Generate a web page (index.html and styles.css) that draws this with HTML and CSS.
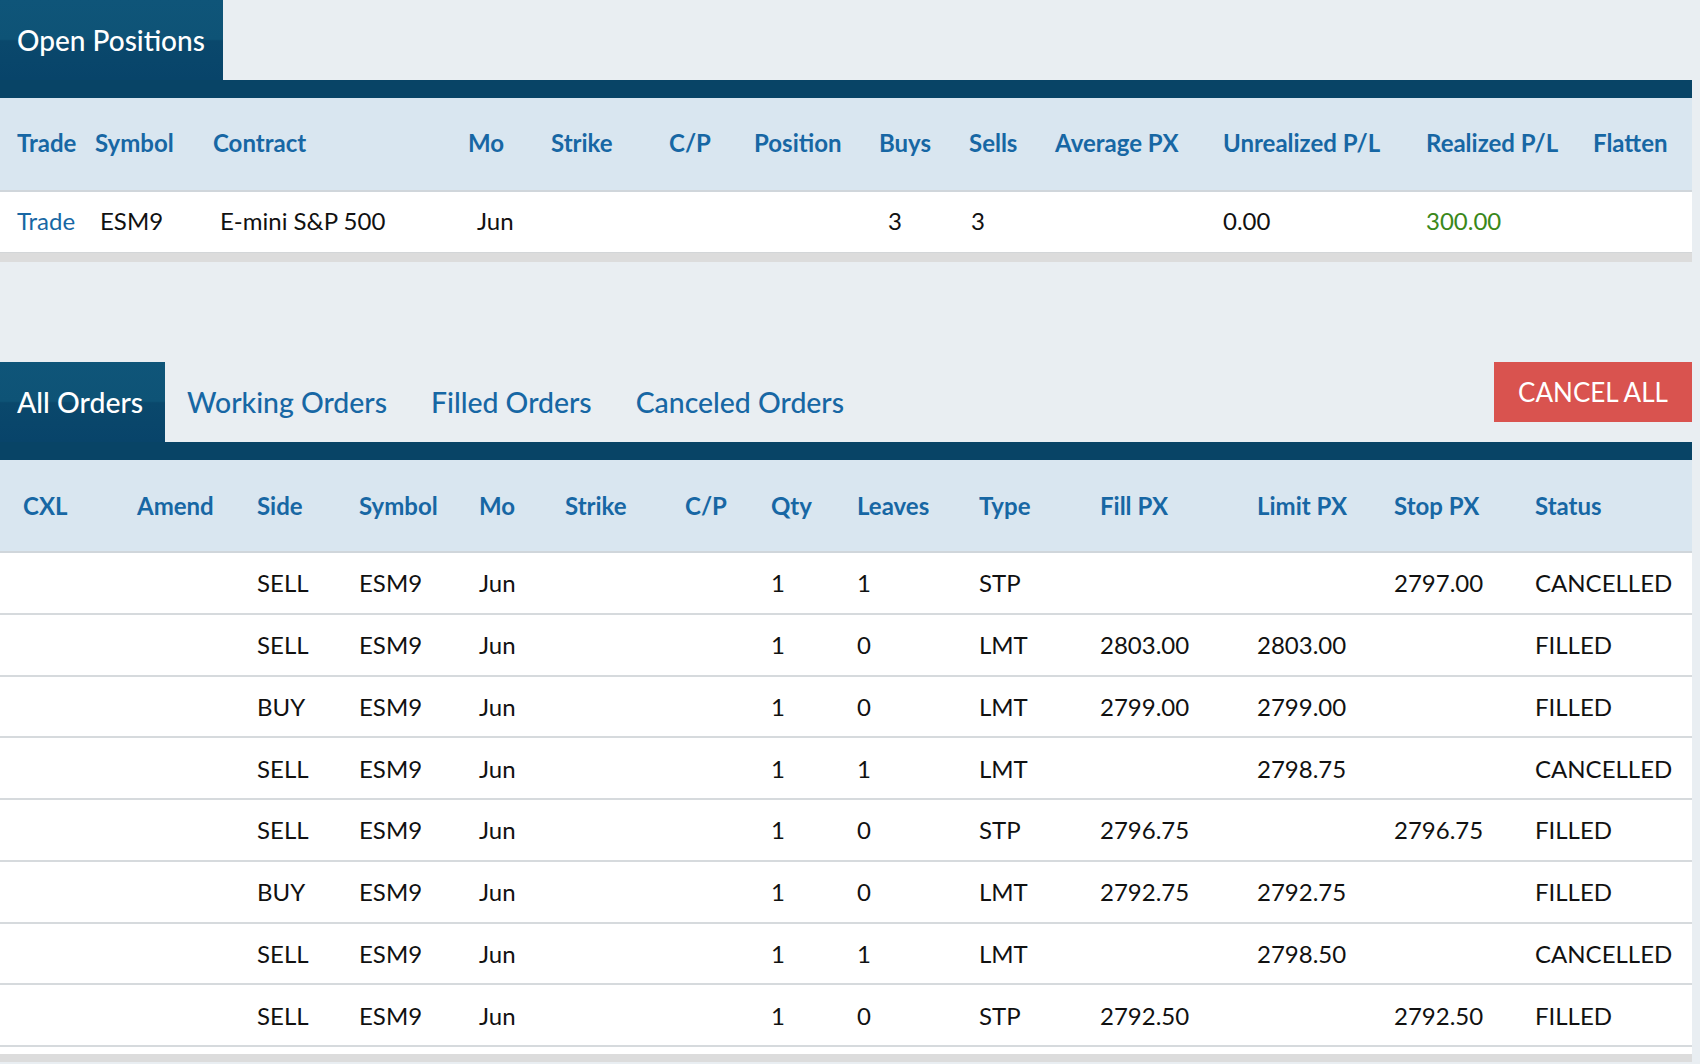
FILE: index.html
```html
<!DOCTYPE html>
<html lang="en">
<head>
<meta charset="utf-8">
<title>Positions and Orders</title>
<link rel="stylesheet" href="styles.css">
</head>
<body>
<div class="page">
  <section class="panel positions">
    <div class="tabbar">
      <div class="tab active">Open Positions</div>
    </div>
    <div class="bar"></div>
    <div class="pos-grid head">
      <div>Trade</div><div>Symbol</div><div>Contract</div><div>Mo</div><div>Strike</div><div>C/P</div><div>Position</div><div>Buys</div><div>Sells</div><div>Average PX</div><div>Unrealized P/L</div><div>Realized P/L</div><div>Flatten</div>
    </div>
    <div class="pos-grid data">
      <div class="link">Trade</div><div>ESM9</div><div>E-mini S&amp;P 500</div><div>Jun</div><div></div><div></div><div></div><div>3</div><div>3</div><div></div><div>0.00</div><div class="gain">300.00</div><div></div>
    </div>
    <div class="strip"></div>
  </section>

  <section class="panel orders">
    <div class="tabbar">
      <div class="tab active">All Orders</div>
      <div class="tab">Working Orders</div>
      <div class="tab">Filled Orders</div>
      <div class="tab">Canceled Orders</div>
      <button class="cancel-all">CANCEL ALL</button>
    </div>
    <div class="bar"></div>
    <div class="ord-grid head">
      <div>CXL</div><div>Amend</div><div>Side</div><div>Symbol</div><div>Mo</div><div>Strike</div><div>C/P</div><div>Qty</div><div>Leaves</div><div>Type</div><div>Fill PX</div><div>Limit PX</div><div>Stop PX</div><div>Status</div>
    </div>
    <div class="ord-grid row">
      <div></div><div></div><div>SELL</div><div>ESM9</div><div>Jun</div><div></div><div></div><div>1</div><div>1</div><div>STP</div><div></div><div></div><div>2797.00</div><div>CANCELLED</div>
    </div>
    <div class="ord-grid row">
      <div></div><div></div><div>SELL</div><div>ESM9</div><div>Jun</div><div></div><div></div><div>1</div><div>0</div><div>LMT</div><div>2803.00</div><div>2803.00</div><div></div><div>FILLED</div>
    </div>
    <div class="ord-grid row">
      <div></div><div></div><div>BUY</div><div>ESM9</div><div>Jun</div><div></div><div></div><div>1</div><div>0</div><div>LMT</div><div>2799.00</div><div>2799.00</div><div></div><div>FILLED</div>
    </div>
    <div class="ord-grid row">
      <div></div><div></div><div>SELL</div><div>ESM9</div><div>Jun</div><div></div><div></div><div>1</div><div>1</div><div>LMT</div><div></div><div>2798.75</div><div></div><div>CANCELLED</div>
    </div>
    <div class="ord-grid row">
      <div></div><div></div><div>SELL</div><div>ESM9</div><div>Jun</div><div></div><div></div><div>1</div><div>0</div><div>STP</div><div>2796.75</div><div></div><div>2796.75</div><div>FILLED</div>
    </div>
    <div class="ord-grid row">
      <div></div><div></div><div>BUY</div><div>ESM9</div><div>Jun</div><div></div><div></div><div>1</div><div>0</div><div>LMT</div><div>2792.75</div><div>2792.75</div><div></div><div>FILLED</div>
    </div>
    <div class="ord-grid row">
      <div></div><div></div><div>SELL</div><div>ESM9</div><div>Jun</div><div></div><div></div><div>1</div><div>1</div><div>LMT</div><div></div><div>2798.50</div><div></div><div>CANCELLED</div>
    </div>
    <div class="ord-grid row">
      <div></div><div></div><div>SELL</div><div>ESM9</div><div>Jun</div><div></div><div></div><div>1</div><div>0</div><div>STP</div><div>2792.50</div><div></div><div>2792.50</div><div>FILLED</div>
    </div>
    <div class="table-foot"></div>
    <div class="strip"></div>
  </section>
</div>
</body>
</html>
```

FILE: styles.css
```css
html, body {
  margin: 0;
  padding: 0;
  background: #e9eef2;
}

body {
  font-family: Lato, "Open Sans", "Liberation Sans", sans-serif;
  color: #111;
}

.page {
  width: 1692px;
  display: flex;
  flex-direction: column;
}

.orders {
  margin-top: 100px;
}

.tabbar {
  height: 80px;
  display: flex;
  align-items: stretch;
}

.tab {
  display: flex;
  align-items: center;
  padding: 0 22px;
  font-size: 28.4px;
  font-weight: 500;
  color: #1767a4;
  white-space: nowrap;
}

.tab:first-child {
  padding-left: 17px;
}

.positions .tab {
  padding-right: 18px;
  font-size: 28px;
}

.tab.active {
  color: #fff;
  background: linear-gradient(to bottom, #0f5579 0%, #0e5376 49%, #0a486c 51%, #08446a 100%);
}

.cancel-all {
  margin-left: auto;
  align-self: flex-start;
  height: 60px;
  width: 198px;
  border: 0;
  padding: 0;
  background: #d9534f;
  color: #fff;
  font-family: Lato, "Open Sans", sans-serif;
  font-size: 26px;
  cursor: pointer;
}

.bar {
  height: 18px;
  background: #084466;
}

.head {
  background: #d9e6f0;
  border-bottom: 2px solid #d0d6db;
  font-weight: bold;
  font-size: 24px;
  color: #1767a4;
}

.pos-grid,
.ord-grid {
  display: grid;
  align-items: center;
  white-space: nowrap;
}

.pos-grid.head {
  box-sizing: border-box;
  height: 94px;
  padding-left: 17px;
  padding-bottom: 4px;
  grid-template-columns: 78px 118px 255px 83px 118px 85px 125px 90px 86px 168px 203px 167px 1fr;
}

.pos-grid.data {
  box-sizing: border-box;
  height: 60px;
  padding-left: 17px;
  padding-bottom: 4px;
  background: #fff;
  font-size: 24px;
  grid-template-columns: 83px 120px 257px 83px 120px 85px 123px 83px 84px 168px 203px 167px 1fr;
}

.link {
  color: #1767a4;
}

.gain {
  color: #3a881a;
}

.strip {
  height: 9px;
  background: #dcdcdc;
  border-top: 1px solid #d3d6d8;
}

.ord-grid {
  padding-left: 23px;
  grid-template-columns: 114px 120px 102px 120px 86px 120px 86px 86px 122px 121px 157px 137px 141px 1fr;
}

.ord-grid.head {
  height: 93px;
  box-sizing: border-box;
  padding-bottom: 1px;
}

.ord-grid.row {
  box-sizing: border-box;
  height: 61.75px;
  background: #fff;
  border-bottom: 2px solid #d6dadd;
  font-size: 24px;
}

.table-foot {
  height: 7px;
  background: #fff;
}

.orders .strip {
  height: 8px;
  border-top: 0;
}
```
